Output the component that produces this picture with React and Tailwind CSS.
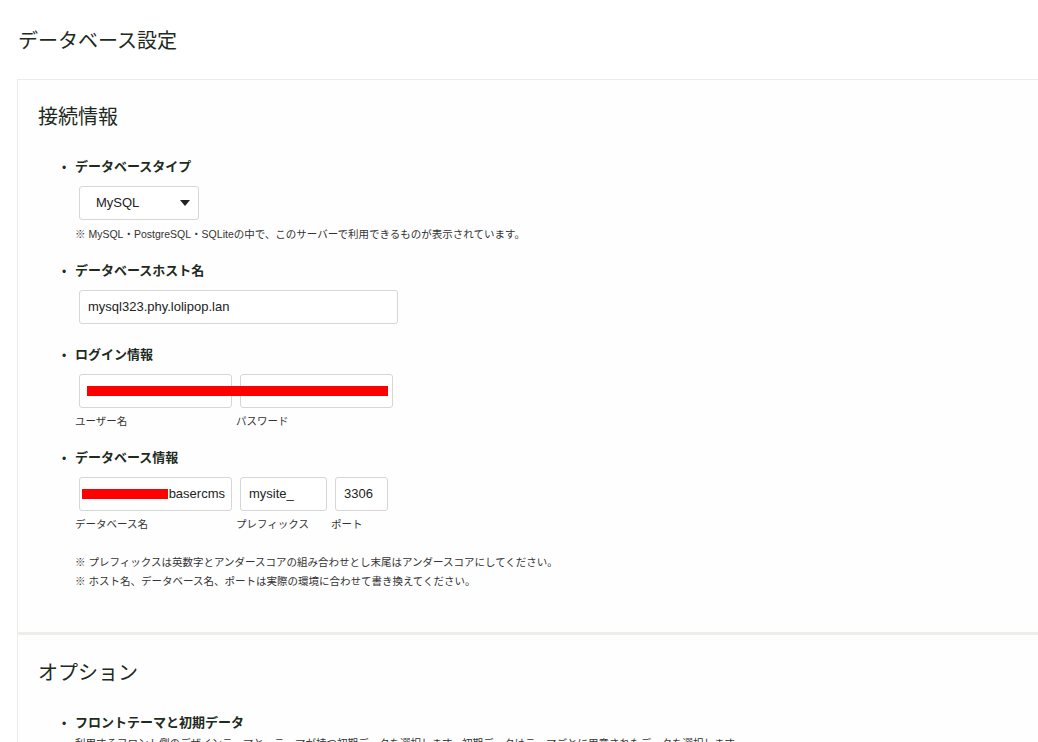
import React from "react";

const font = { fontFamily: '"Liberation Sans", "Noto Sans CJK JP", sans-serif' };

const Field = ({ width, value, redact, children }) => (
  <div className="relative">
    <div
      className={`h-[34px] ${width} ml-1 border border-[#d6d6d6] rounded-[3px] bg-white flex items-center px-[8px] text-[13px] text-[#222]`}
    >
      {value}
    </div>
    {redact}
    {children && <p className="text-[10.5px] leading-[15px] text-[#333] mt-[6px]">{children}</p>}
  </div>
);

const Item = ({ label, children, className = "" }) => (
  <li className={`relative pl-[13px] ${className}`}>
    <span className="absolute left-0 top-[1px] text-[12px] text-[#1d2a1d]">•</span>
    <h3 className="text-[13px] font-bold text-[#1d2a1d] leading-[18px]">{label}</h3>
    <div className="mt-[10px]">{children}</div>
  </li>
);

export default function App() {
  return (
    <div className="h-screen bg-white overflow-hidden text-[#1d2a1d]" style={font}>
      <h1 className="pl-[18px] pt-[27px] text-[20px] leading-[28px] font-normal text-[#1d2a1d]">
        データベース設定
      </h1>
      <div className="mt-[24px] ml-[17px] border-l border-t border-[#ececea] bg-[#fefefe] w-[1100px]">
        <section className="pl-[20px] pt-[23px] pb-[41px] border-b-[3px] border-[#ededea]">
          <h2 className="text-[20px] leading-[28px] font-normal">接続情報</h2>
          <ul className="mt-[27px] ml-[24px] flex flex-col gap-[20px]">
            <Item label="データベースタイプ">
              <div className="h-[34px] w-[120px] ml-1 border border-[#d6d6d6] rounded-[3px] bg-white flex items-center justify-between pl-[16px] pr-[8px] text-[13px] text-[#222]">
                MySQL
                <svg width="10" height="6" viewBox="0 0 10 6">
                  <path d="M0 0h10L5 6z" fill="#222" />
                </svg>
              </div>
              <p className="text-[10.5px] leading-[15px] text-[#333] mt-[7px]">
                ※ MySQL・PostgreSQL・SQLiteの中で、このサーバーで利用できるものが表示されています。
              </p>
            </Item>
            <Item label="データベースホスト名" className="pb-[2px]">
              <Field width="w-[319px]" value="mysql323.phy.lolipop.lan" />
            </Item>
            <Item label="ログイン情報">
              <div className="flex gap-[4px]">
                <Field
                  width="w-[153px]"
                  redact={<div className="absolute left-[12px] top-[12px] w-[301px] h-[10px] bg-[#ff0000] z-10" />}
                >
                  ユーザー名
                </Field>
                <Field width="w-[153px]">パスワード</Field>
              </div>
            </Item>
            <Item label="データベース情報">
              <div className="flex gap-[4px]">
                <Field
                  width="w-[153px] justify-end !px-[6px]"
                  value="basercms"
                  redact={<div className="absolute left-[7px] top-[12px] w-[86px] h-[10px] bg-[#ff0000]" />}
                >
                  データベース名
                </Field>
                <Field width="w-[87px]" value="mysite_">
                  プレフィックス
                </Field>
                <Field width="w-[53px]" value="3306">
                  ポート
                </Field>
              </div>
              <div className="mt-[21px] text-[10.5px] text-[#333] leading-[19px]">
                <p>※ プレフィックスは英数字とアンダースコアの組み合わせとし末尾はアンダースコアにしてください。</p>
                <p>※ ホスト名、データベース名、ポートは実際の環境に合わせて書き換えてください。</p>
              </div>
            </Item>
          </ul>
        </section>
        <section className="pl-[20px] pt-[24px] pb-[40px]">
          <h2 className="text-[20px] leading-[28px] font-normal">オプション</h2>
          <ul className="mt-[27px] ml-[24px]">
            <Item label="フロントテーマと初期データ">
              <p className="text-[10.5px] leading-[15px] text-[#333] -mt-[6px]">
                利用するフロント側のデザインテーマと、テーマが持つ初期データを選択します。初期データはテーマごとに用意されたデータを選択します。
              </p>
            </Item>
          </ul>
        </section>
      </div>
    </div>
  );
}
